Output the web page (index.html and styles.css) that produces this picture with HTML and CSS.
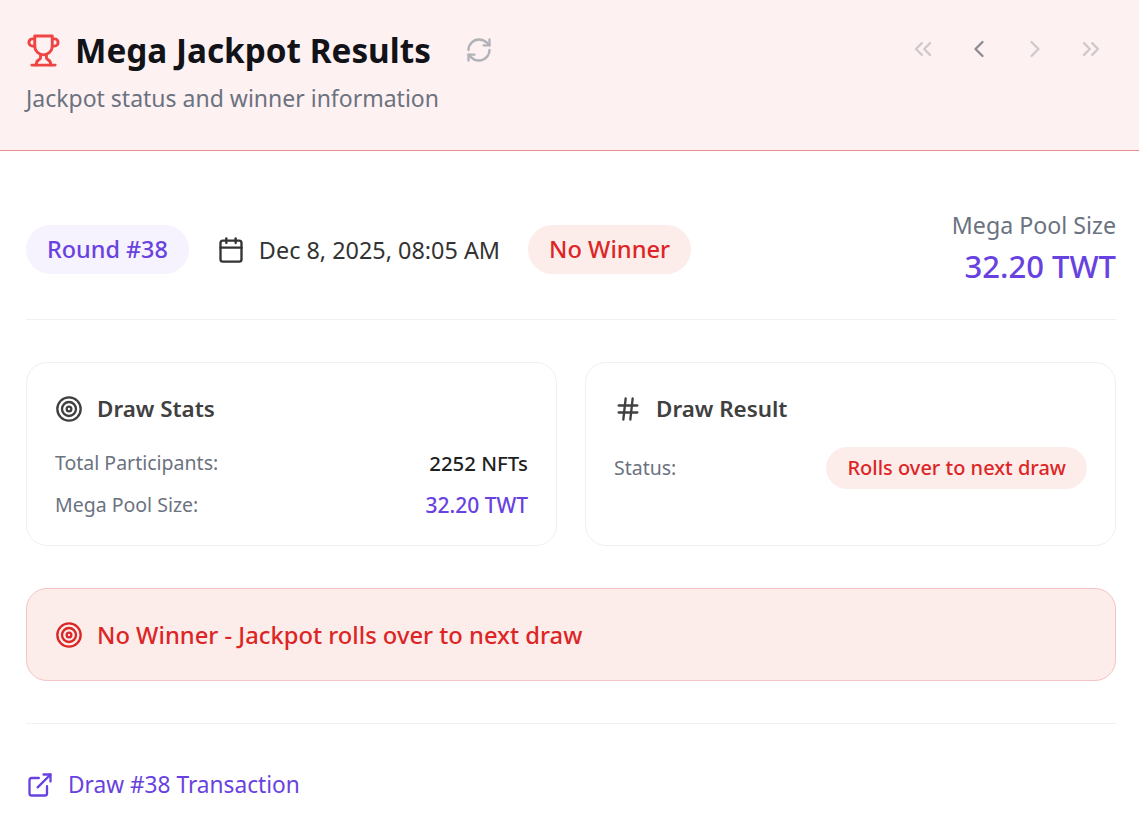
FILE: index.html
```html
<!DOCTYPE html>
<html lang="en">
<head>
    <meta charset="UTF-8">
    <meta name="viewport" content="width=device-width, initial-scale=1.0">
    <title>Mega Jackpot Results</title>
    <link rel="stylesheet" href="styles.css">
</head>
<body>

    <header class="top">
        <div class="top-left">
            <div class="title-row">
                <svg class="icon trophy" viewBox="0 0 24 24"><path d="M6 9H4.5a2.5 2.5 0 0 1 0-5H6"/><path d="M18 9h1.5a2.5 2.5 0 0 0 0-5H18"/><path d="M4 22h16"/><path d="M10 14.66V17c0 .55-.47.98-.97 1.21C7.85 18.75 7 20.24 7 22"/><path d="M14 14.66V17c0 .55.47.98.97 1.21C16.15 18.75 17 20.24 17 22"/><path d="M18 2H6v7a6 6 0 0 0 12 0V2Z"/></svg>
                <h1>Mega Jackpot Results</h1>
                <svg class="icon refresh" viewBox="0 0 24 24"><path d="M3 12a9 9 0 0 1 9-9 9.75 9.75 0 0 1 6.74 2.74L21 8"/><path d="M21 3v5h-5"/><path d="M21 12a9 9 0 0 1-9 9 9.75 9.75 0 0 1-6.74-2.74L3 16"/><path d="M8 16H3v5"/></svg>
            </div>
            <p class="subtitle">Jackpot status and winner information</p>
        </div>
        <nav class="pager">
            <svg class="icon faded" viewBox="0 0 24 24"><path d="m11 17-5-5 5-5"/><path d="m18 17-5-5 5-5"/></svg>
            <svg class="icon" viewBox="0 0 24 24"><path d="m15 18-6-6 6-6"/></svg>
            <svg class="icon faded" viewBox="0 0 24 24"><path d="m9 18 6-6-6-6"/></svg>
            <svg class="icon faded" viewBox="0 0 24 24"><path d="m6 17 5-5-5-5"/><path d="m13 17 5-5-5-5"/></svg>
        </nav>
    </header>

    <main class="content">
        <section class="meta">
            <div class="meta-left">
                <span class="pill pill-purple">Round #38</span>
                <span class="date">
                    <svg class="icon" viewBox="0 0 24 24"><path d="M8 2v4"/><path d="M16 2v4"/><rect x="3" y="4" width="18" height="18" rx="2"/><path d="M3 10h18"/></svg>
                    Dec 8, 2025, 08:05 AM
                </span>
                <span class="pill pill-red">No Winner</span>
            </div>
            <div class="pool">
                <div class="pool-label">Mega Pool Size</div>
                <div class="pool-value">32.20 TWT</div>
            </div>
        </section>

        <section class="cards">
            <div class="card">
                <h2>
                    <svg class="icon" viewBox="0 0 24 24"><circle cx="12" cy="12" r="10"/><circle cx="12" cy="12" r="6"/><circle cx="12" cy="12" r="2"/></svg>
                    Draw Stats
                </h2>
                <div class="stat">
                    <span class="stat-label">Total Participants:</span>
                    <span class="stat-value">2252 NFTs</span>
                </div>
                <div class="stat">
                    <span class="stat-label">Mega Pool Size:</span>
                    <span class="stat-value purple">32.20 TWT</span>
                </div>
            </div>
            <div class="card">
                <h2>
                    <svg class="icon" viewBox="0 0 24 24"><path d="M4 9h16"/><path d="M4 15h16"/><path d="M10 3 8 21"/><path d="M16 3l-2 18"/></svg>
                    Draw Result
                </h2>
                <div class="stat stat-status">
                    <span class="stat-label">Status:</span>
                    <span class="pill-small">Rolls over to next draw</span>
                </div>
            </div>
        </section>

        <div class="alert">
            <svg class="icon" viewBox="0 0 24 24"><circle cx="12" cy="12" r="10"/><circle cx="12" cy="12" r="6"/><circle cx="12" cy="12" r="2"/></svg>
            No Winner - Jackpot rolls over to next draw
        </div>

        <footer class="links">
            <a href="#">
                <svg class="icon" viewBox="0 0 24 24"><path d="M15 3h6v6"/><path d="M10 14 21 3"/><path d="M18 13v6a2 2 0 0 1-2 2H5a2 2 0 0 1-2-2V8a2 2 0 0 1 2-2h6"/></svg>
                Draw #38 Transaction
            </a>
        </footer>
    </main>

</body>
</html>
```

FILE: styles.css
```css
body {
    font-family: "Noto Sans", "Open Sans", sans-serif;
    margin: 0;
    padding: 0;
    background-color: white;
    color: #1f2937;
}

.icon {
    width: 28px;
    height: 28px;
    fill: none;
    stroke: currentColor;
    stroke-width: 2;
    stroke-linecap: round;
    stroke-linejoin: round;
    flex-shrink: 0;
}

.top {
    display: flex;
    justify-content: space-between;
    align-items: flex-start;
    box-sizing: border-box;
    height: 151px;
    padding: 26px 34px 0 26px;
    background-color: #fef1f1;
    border-bottom: 1px solid #ea8f8f;
}

.title-row {
    display: flex;
    align-items: center;
    gap: 14px;
    height: 48px;
}

.title-row h1 {
    margin: 0;
    font-size: 33.3px;
    font-weight: 700;
    color: #111318;
}

.trophy {
    width: 35px;
    height: 35px;
    color: #ef4444;
}

.refresh {
    margin-left: 20px;
    color: #b1b2b7;
}

.subtitle {
    margin: 3px 0 0;
    font-size: 23px;
    line-height: 42px;
    color: #6b7280;
}

.pager {
    display: flex;
    gap: 28px;
    margin-top: 9px;
    color: #8a8b95;
}

.pager .faded {
    color: #cfc9cd;
}

.content {
    padding: 56px 23px 0 26px;
}

.meta {
    display: flex;
    justify-content: space-between;
    align-items: center;
    padding-bottom: 30px;
    border-bottom: 1px solid #f0f0f2;
}

.meta-left {
    display: flex;
    align-items: center;
    gap: 28px;
    padding-top: 3px;
}

.pill {
    padding: 0 21px;
    line-height: 49px;
    border-radius: 25px;
    font-size: 23.4px;
    font-weight: 500;
}

.pill-purple {
    background-color: #f7f3fe;
    color: #6842e0;
}

.pill-red {
    background-color: #fcedeb;
    color: #dc2626;
    font-size: 23.7px;
}

.date {
    display: flex;
    align-items: center;
    gap: 14px;
    font-size: 23.4px;
    color: #333;
}

.pool {
    text-align: right;
}

.pool-label {
    font-size: 23.2px;
    line-height: 36px;
    color: #6b7280;
}

.pool-value {
    font-size: 31px;
    line-height: 46px;
    font-weight: 500;
    color: #6842e0;
}

.cards {
    display: grid;
    grid-template-columns: 1fr 1fr;
    gap: 28px;
    margin-top: 42px;
}

.card {
    height: 184px;
    box-sizing: border-box;
    padding: 30px 28px 0;
    border: 1px solid #f0f0f2;
    border-radius: 21px;
}

.card h2 {
    display: flex;
    align-items: center;
    gap: 14px;
    margin: 0 0 18px;
    font-size: 22.4px;
    font-weight: 600;
    color: #404040;
}

.stat {
    display: flex;
    justify-content: space-between;
    align-items: center;
    font-size: 19.5px;
    line-height: 42px;
}

/* margin collapses with the h2 margin, so this is 18px + 5px */
.stat-status {
    margin-top: 23px;
}

.stat-label {
    color: #6b7280;
}

.stat-value {
    font-size: 20.4px;
    font-weight: 500;
    color: #1f1f1f;
}

.stat-value.purple {
    font-size: 21px;
    color: #6842e0;
}

.pill-small {
    padding: 0 21px;
    border-radius: 21px;
    background-color: #fcedeb;
    color: #dc2626;
    font-size: 20px;
    font-weight: 500;
}

.alert {
    display: flex;
    align-items: center;
    gap: 14px;
    margin-top: 42px;
    height: 93px;
    box-sizing: border-box;
    padding: 0 28px;
    border: 1px solid #f4c4c4;
    border-radius: 21px;
    background-color: #fcedeb;
    color: #dc2626;
    font-size: 23.75px;
    font-weight: 500;
}

.links {
    margin-top: 42px;
    padding-top: 45px;
    border-top: 1px solid #f0f0f2;
}

.links a {
    display: inline-flex;
    align-items: center;
    gap: 14px;
    color: #6842e0;
    font-size: 22.7px;
    text-decoration: none;
}
```
